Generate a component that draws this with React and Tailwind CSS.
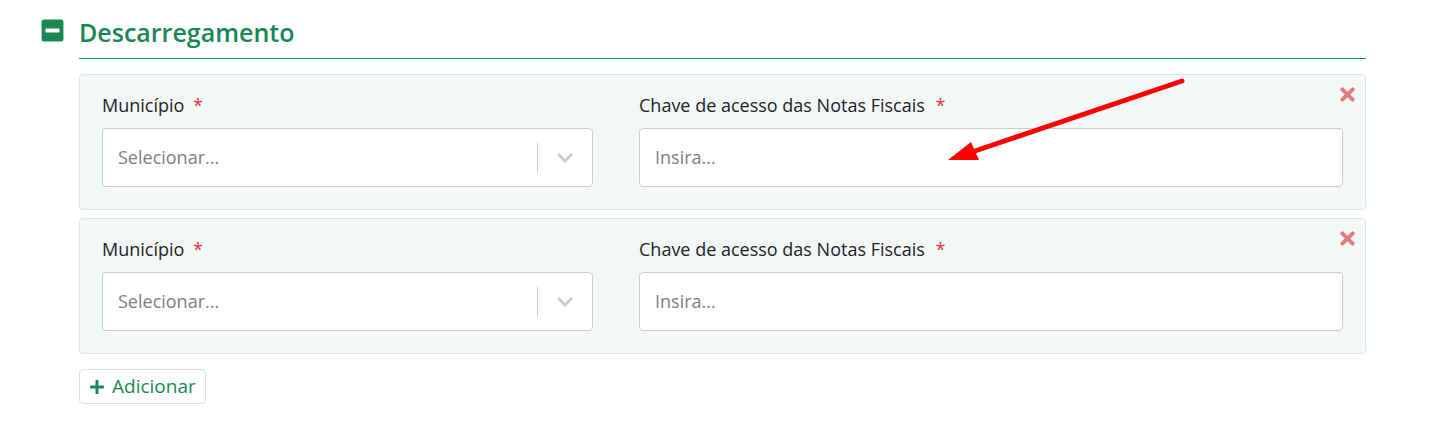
import { FaMinusSquare, FaTimes, FaPlus, FaChevronDown } from 'react-icons/fa'

const font = { fontFamily: '"Open Sans", "Noto Sans", sans-serif' }

const Entry = () => (
  <div className="relative bg-[#f3f7f6] border border-[#d9e8e3] rounded-[4px] px-[22px] pt-[18px] pb-[22px]">
    <button className="absolute top-[9px] right-[7px] text-[#e07b7b]">
      <FaTimes className="w-[21px] h-[21px]" />
    </button>
    <div className="flex gap-[46px]">
      <div className="w-[491px]">
        <label className="block h-[24px] leading-[24px] mb-[11px] text-[18px] text-[#212529]">
          Município <span className="text-[#dc3545] ml-[4px]">*</span>
        </label>
        <div className="h-[59px] bg-white border border-[#cccccc] rounded-[4px] flex items-center">
          <span className="flex-1 pl-[15px] text-[18px] text-[#808080]">Selecionar...</span>
          <span className="w-px h-[30px] bg-[#cccccc]" />
          <span className="w-[54px] flex justify-center text-[#cccccc]">
            <FaChevronDown className="w-[18px] h-[18px]" />
          </span>
        </div>
      </div>
      <div className="flex-1">
        <label className="block h-[24px] leading-[24px] mb-[11px] text-[18px] text-[#212529]">
          Chave de acesso das Notas Fiscais <span className="text-[#dc3545] ml-[6px]">*</span>
        </label>
        <div className="h-[59px] bg-white border border-[#cccccc] rounded-[4px] flex items-center px-[15px]">
          <span className="text-[18px] text-[#808080]">Insira...</span>
        </div>
      </div>
    </div>
  </div>
)

export default function App() {
  return (
    <div className="relative bg-white w-[1443px] h-[434px] pt-[17px] pl-[41px] pr-[77px]" style={font}>
      <div className="flex items-start">
        <FaMinusSquare className="w-[23px] h-[25px] mt-[1px] text-[#198754]" />
        <div className="flex-1 ml-[15px]">
          <h2 className="text-[25px] leading-[30px] font-semibold text-[#198754]">Descarregamento</h2>
          <div className="h-px mt-[11px] bg-[#1a9158]" />
        </div>
      </div>

      <div className="ml-[38px] mt-[15px] flex flex-col gap-[8px]">
        <Entry />
        <Entry />
      </div>

      <div className="ml-[38px] mt-[15px]">
        <button className="h-[35px] px-[9px] flex items-center gap-[7px] border border-[#d3e6de] rounded-[4px] text-[#198754] text-[19px]">
          <FaPlus className="w-[16px] h-[16px]" />
          Adicionar
        </button>
      </div>

      <svg className="absolute inset-0 pointer-events-none" width="1443" height="434">
        <line x1="1182" y1="81" x2="972" y2="152" stroke="#ff0000" strokeWidth="5" strokeLinecap="round" />
        <polygon points="948,160 979,160 971,142" fill="#ff0000" />
      </svg>
    </div>
  )
}
